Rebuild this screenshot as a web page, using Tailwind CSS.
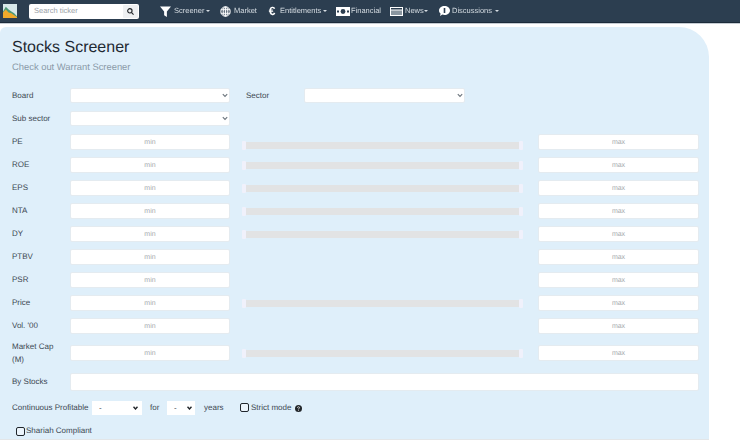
<!DOCTYPE html>
<html lang="en">
<head>
  <meta charset="UTF-8" />
  <title>Stocks Screener</title>
  <script src="https://cdn.jsdelivr.net/npm/@tailwindcss/browser@4"></script>
</head>
<body class="bg-white text-[#3d4852] font-['Liberation_Sans',Arial,sans-serif] text-[8px] [text-rendering:geometricPrecision] h-[444px] w-[740px] overflow-hidden">

  <!-- navbar -->
  <nav class="opacity-[.999] h-[23px] bg-[#2c3e50] border-b border-[#1c2b3a] shadow-[0_1px_0_#c5ccd3] flex items-center text-[#d5dce2] text-[7.5px]">
    <svg class="ml-[3px] w-[14px] h-[14px]" viewBox="0 0 15 15">
      <rect width="15" height="15" fill="#d8e8ea"/>
      <path d="M0 8 L3 3 L6 6 L9 8 L12 10 L15 13 V15 H0Z" fill="#4f9a78"/>
      <path d="M0 9 L3 6 L6 9 L9 10 L12 12 L15 14 V15 H0Z" fill="#f0a92c"/>
    </svg>
    <div class="ml-[12px] w-[110px] h-[15px] bg-white rounded-[2px] flex items-center justify-between">
      <span class="pl-[5px] text-[#9aa1a8]">Search ticker</span>
      <span class="w-[15px] h-[13px] mr-px bg-[#eef0f2] rounded-[1px] flex items-center justify-center">
        <svg class="w-[7px] h-[7px]" viewBox="0 0 16 16" fill="none" stroke="#212529" stroke-width="2.6"><circle cx="6.5" cy="6.5" r="5"/><path d="M10.5 10.5 15 15"/></svg>
      </span>
    </div>
    <div class="ml-[21px] flex items-center">
      <svg class="w-[11px] h-[11px] mr-[3px]" viewBox="0 0 12 12" fill="#fff"><path d="M0 0.5H12L7.5 6V12L4.5 10V6Z"/></svg>
      <span class="w-[31px]">Screener</span><span class="ml-[1px] border-x-[2.5px] border-x-transparent border-t-[2.5px] border-t-[#d5dce2]"></span>
    </div>
    <div class="ml-[10px] flex items-center">
      <svg class="w-[11px] h-[11px] mr-[3px]" viewBox="0 0 12 12" fill="none" stroke="#fff"><circle cx="6" cy="6" r="5.2" fill="#fff" fill-opacity=".25"/><ellipse cx="6" cy="6" rx="2.4" ry="5.2"/><path d="M1 4H11M1 8H11M6 1V11"/></svg>
      <span class="w-[24px]">Market</span>
    </div>
    <div class="ml-[10px] flex items-center">
      <span class="w-[8px] mr-[4px] text-white text-[12px] font-bold leading-none text-center">€</span>
      <span class="w-[42px]">Entitlements</span><span class="ml-px border-x-[2.5px] border-x-transparent border-t-[2.5px] border-t-[#d5dce2]"></span>
    </div>
    <div class="ml-[9px] flex items-center">
      <svg class="w-[14px] h-[9px] mr-px" viewBox="0 0 14 9"><rect width="14" height="9" fill="#fff"/><circle cx="7" cy="4.5" r="2.4" fill="#2c3e50"/><rect x="1" y="3.5" width="2" height="2" fill="#2c3e50"/><rect x="11" y="3.5" width="2" height="2" fill="#2c3e50"/></svg>
      <span class="w-[31px]">Financial</span>
    </div>
    <div class="ml-[8px] flex items-center">
      <svg class="w-[13px] h-[9px] mr-[2px]" viewBox="0 0 13 9"><rect width="13" height="9" fill="#fff"/><rect x="1" y="1" width="11" height="1.5" fill="#2c3e50"/><rect x="1" y="3.5" width="11" height="4.5" fill="#8a96a0"/></svg>
      <span class="w-[18px]">News</span><span class="ml-[1px] border-x-[2.5px] border-x-transparent border-t-[2.5px] border-t-[#d5dce2]"></span>
    </div>
    <div class="ml-[11px] flex items-center">
      <svg class="w-[11px] h-[10px] mr-[2px]" viewBox="0 0 11 10"><path d="M5.5 0C8.5 0 11 2 11 4.5S8.5 9 5.5 9C4.7 9 4 8.9 3.4 8.6L1 10L1.6 7.6C.6 6.8 0 5.7 0 4.5 0 2 2.5 0 5.5 0Z" fill="#fff"/><rect x="4.7" y="2" width="1.6" height="5" fill="#2c3e50"/></svg>
      <span class="w-[42px]">Discussions</span><span class="ml-px border-x-[2.5px] border-x-transparent border-t-[2.5px] border-t-[#d5dce2]"></span>
    </div>
  </nav>

  <!-- screener panel -->
  <main class="opacity-[.999] mt-[4px] w-[709px] h-[413px] bg-[#dfeffa] rounded-tl-[6px] rounded-tr-[30px] border-b border-[#e3e6e8] pl-[12px] pr-[10px] pt-[11px]">
    <h1 class="text-[16px] leading-[20px] text-[#1f2a33]">Stocks Screener</h1>
    <p class="mt-[3px] text-[9.4px] leading-[12px] text-[#8a9aa8]">Check out Warrant Screener</p>

    <div class="mt-[15px] flex items-center h-[15px]">
      <span class="w-[58px]">Board</span>
      <div class="relative w-[160px] h-[15px]">
        <select class="appearance-none block w-full h-full bg-white rounded-[2px] border border-[#e4ebf0]"></select>
        <svg class="absolute right-[2px] top-[5px] w-[6px] h-[5px]" viewBox="0 0 6 5" fill="none" stroke="#6c757d" stroke-width="1.1"><path d="M.8 1.2 3 3.5 5.2 1.2"/></svg>
      </div>
      <span class="ml-[16px] w-[58px]">Sector</span>
      <div class="relative w-[161px] h-[15px]">
        <select class="appearance-none block w-full h-full bg-white rounded-[2px] border border-[#e4ebf0]"></select>
        <svg class="absolute right-[2px] top-[5px] w-[6px] h-[5px]" viewBox="0 0 6 5" fill="none" stroke="#6c757d" stroke-width="1.1"><path d="M.8 1.2 3 3.5 5.2 1.2"/></svg>
      </div>
    </div>
    <div class="mt-[8px] flex items-center h-[15px]">
      <span class="w-[58px]">Sub sector</span>
      <div class="relative w-[160px] h-[15px]">
        <select class="appearance-none block w-full h-full bg-white rounded-[2px] border border-[#e4ebf0]"></select>
        <svg class="absolute right-[2px] top-[5px] w-[6px] h-[5px]" viewBox="0 0 6 5" fill="none" stroke="#6c757d" stroke-width="1.1"><path d="M.8 1.2 3 3.5 5.2 1.2"/></svg>
      </div>
    </div>

    <!-- range rows -->
    <div class="mt-[8px] flex flex-col gap-[7px]">
      <div class="flex items-center h-[16px]">
        <span class="w-[58px]">PE</span>
        <div class="w-[160px] h-[16px] pt-[2px] bg-white rounded-[2px] border border-[#e4ebf0] text-[#a5a9ad] text-[7px] flex items-center justify-center">min</div>
        <div class="w-[308px] pl-[12px] pr-[15px] flex items-center mt-[6px]"><span class="w-[4px] h-[9px] bg-[#f0f1fb] rounded-[1px]"></span><span class="flex-1 h-[7px] bg-[#e2e3e4]"></span><span class="w-[4px] h-[9px] bg-[#f0f1fb] rounded-[1px]"></span></div>
        <div class="w-[161px] h-[16px] pt-[2px] bg-white rounded-[2px] border border-[#e4ebf0] text-[#a5a9ad] text-[7px] flex items-center justify-center">max</div>
      </div>
      <div class="flex items-center h-[16px]">
        <span class="w-[58px]">ROE</span>
        <div class="w-[160px] h-[16px] pt-[2px] bg-white rounded-[2px] border border-[#e4ebf0] text-[#a5a9ad] text-[7px] flex items-center justify-center">min</div>
        <div class="w-[308px] pl-[12px] pr-[15px] flex items-center"><span class="w-[4px] h-[9px] bg-[#f0f1fb] rounded-[1px]"></span><span class="flex-1 h-[7px] bg-[#e2e3e4]"></span><span class="w-[4px] h-[9px] bg-[#f0f1fb] rounded-[1px]"></span></div>
        <div class="w-[161px] h-[16px] pt-[2px] bg-white rounded-[2px] border border-[#e4ebf0] text-[#a5a9ad] text-[7px] flex items-center justify-center">max</div>
      </div>
      <div class="flex items-center h-[16px]">
        <span class="w-[58px]">EPS</span>
        <div class="w-[160px] h-[16px] pt-[2px] bg-white rounded-[2px] border border-[#e4ebf0] text-[#a5a9ad] text-[7px] flex items-center justify-center">min</div>
        <div class="w-[308px] pl-[12px] pr-[15px] flex items-center"><span class="w-[4px] h-[9px] bg-[#f0f1fb] rounded-[1px]"></span><span class="flex-1 h-[7px] bg-[#e2e3e4]"></span><span class="w-[4px] h-[9px] bg-[#f0f1fb] rounded-[1px]"></span></div>
        <div class="w-[161px] h-[16px] pt-[2px] bg-white rounded-[2px] border border-[#e4ebf0] text-[#a5a9ad] text-[7px] flex items-center justify-center">max</div>
      </div>
      <div class="flex items-center h-[16px]">
        <span class="w-[58px]">NTA</span>
        <div class="w-[160px] h-[16px] pt-[2px] bg-white rounded-[2px] border border-[#e4ebf0] text-[#a5a9ad] text-[7px] flex items-center justify-center">min</div>
        <div class="w-[308px] pl-[12px] pr-[15px] flex items-center"><span class="w-[4px] h-[9px] bg-[#f0f1fb] rounded-[1px]"></span><span class="flex-1 h-[7px] bg-[#e2e3e4]"></span><span class="w-[4px] h-[9px] bg-[#f0f1fb] rounded-[1px]"></span></div>
        <div class="w-[161px] h-[16px] pt-[2px] bg-white rounded-[2px] border border-[#e4ebf0] text-[#a5a9ad] text-[7px] flex items-center justify-center">max</div>
      </div>
      <div class="flex items-center h-[16px]">
        <span class="w-[58px]">DY</span>
        <div class="w-[160px] h-[16px] pt-[2px] bg-white rounded-[2px] border border-[#e4ebf0] text-[#a5a9ad] text-[7px] flex items-center justify-center">min</div>
        <div class="w-[308px] pl-[12px] pr-[15px] flex items-center"><span class="w-[4px] h-[9px] bg-[#f0f1fb] rounded-[1px]"></span><span class="flex-1 h-[7px] bg-[#e2e3e4]"></span><span class="w-[4px] h-[9px] bg-[#f0f1fb] rounded-[1px]"></span></div>
        <div class="w-[161px] h-[16px] pt-[2px] bg-white rounded-[2px] border border-[#e4ebf0] text-[#a5a9ad] text-[7px] flex items-center justify-center">max</div>
      </div>
      <div class="flex items-center h-[16px]">
        <span class="w-[58px]">PTBV</span>
        <div class="w-[160px] h-[16px] pt-[2px] bg-white rounded-[2px] border border-[#e4ebf0] text-[#a5a9ad] text-[7px] flex items-center justify-center">min</div>
        <div class="w-[308px]"></div>
        <div class="w-[161px] h-[16px] pt-[2px] bg-white rounded-[2px] border border-[#e4ebf0] text-[#a5a9ad] text-[7px] flex items-center justify-center">max</div>
      </div>
      <div class="flex items-center h-[16px]">
        <span class="w-[58px]">PSR</span>
        <div class="w-[160px] h-[16px] pt-[2px] bg-white rounded-[2px] border border-[#e4ebf0] text-[#a5a9ad] text-[7px] flex items-center justify-center">min</div>
        <div class="w-[308px]"></div>
        <div class="w-[161px] h-[16px] pt-[2px] bg-white rounded-[2px] border border-[#e4ebf0] text-[#a5a9ad] text-[7px] flex items-center justify-center">max</div>
      </div>
      <div class="flex items-center h-[16px]">
        <span class="w-[58px]">Price</span>
        <div class="w-[160px] h-[16px] pt-[2px] bg-white rounded-[2px] border border-[#e4ebf0] text-[#a5a9ad] text-[7px] flex items-center justify-center">min</div>
        <div class="w-[308px] pl-[12px] pr-[15px] flex items-center"><span class="w-[4px] h-[9px] bg-[#f0f1fb] rounded-[1px]"></span><span class="flex-1 h-[7px] bg-[#e2e3e4]"></span><span class="w-[4px] h-[9px] bg-[#f0f1fb] rounded-[1px]"></span></div>
        <div class="w-[161px] h-[16px] pt-[2px] bg-white rounded-[2px] border border-[#e4ebf0] text-[#a5a9ad] text-[7px] flex items-center justify-center">max</div>
      </div>
      <div class="flex items-center h-[16px]">
        <span class="w-[58px]">Vol. '00</span>
        <div class="w-[160px] h-[16px] pt-[2px] bg-white rounded-[2px] border border-[#e4ebf0] text-[#a5a9ad] text-[7px] flex items-center justify-center">min</div>
        <div class="w-[308px]"></div>
        <div class="w-[161px] h-[16px] pt-[2px] bg-white rounded-[2px] border border-[#e4ebf0] text-[#a5a9ad] text-[7px] flex items-center justify-center">max</div>
      </div>
      <div class="mt-[4px] flex items-center h-[16px]">
        <span class="w-[58px] leading-[13px]">Market Cap<br>(M)</span>
        <div class="w-[160px] h-[16px] pt-[2px] bg-white rounded-[2px] border border-[#e4ebf0] text-[#a5a9ad] text-[7px] flex items-center justify-center">min</div>
        <div class="w-[308px] pl-[12px] pr-[15px] flex items-center"><span class="w-[4px] h-[9px] bg-[#f0f1fb] rounded-[1px]"></span><span class="flex-1 h-[7px] bg-[#e2e3e4]"></span><span class="w-[4px] h-[9px] bg-[#f0f1fb] rounded-[1px]"></span></div>
        <div class="w-[161px] h-[16px] pt-[2px] bg-white rounded-[2px] border border-[#e4ebf0] text-[#a5a9ad] text-[7px] flex items-center justify-center">max</div>
      </div>
    </div>

    <div class="mt-[12px] flex items-center h-[18px]">
      <span class="w-[58px]">By Stocks</span>
      <div class="w-[629px] h-[18px] bg-white rounded-[2px] border border-[#e4ebf0]"></div>
    </div>

    <div class="mt-[9px] flex items-center h-[15px] whitespace-nowrap">
      <span class="w-[80px]">Continuous Profitable</span>
      <div class="relative w-[50px] h-[14px]">
        <select class="appearance-none block w-full h-full bg-white pl-[7px]"><option>-</option></select>
        <svg class="absolute right-[4px] top-[5px] w-[5px] h-[4px]" viewBox="0 0 5 4" fill="none" stroke="#212529" stroke-width="1.4"><path d="M.5 .8 2.5 3 4.5 .8"/></svg>
      </div>
      <span class="ml-[8px] w-[9px]">for</span>
      <div class="relative ml-[8px] w-[28px] h-[14px]">
        <select class="appearance-none block w-full h-full bg-white pl-[7px]"><option>-</option></select>
        <svg class="absolute right-[3px] top-[5px] w-[5px] h-[4px]" viewBox="0 0 5 4" fill="none" stroke="#212529" stroke-width="1.4"><path d="M.5 .8 2.5 3 4.5 .8"/></svg>
      </div>
      <span class="ml-[9px] w-[19px]">years</span>
      <span class="ml-[17px] w-[9px] h-[9px] bg-white/40 border border-[#20262c] rounded-[2px]"></span>
      <span class="ml-[2px] w-[37px]">Strict mode</span>
      <svg class="ml-[7px] mt-[2px] w-[7px] h-[7px]" viewBox="0 0 8 8"><circle cx="4" cy="4" r="4" fill="#212529"/><path d="M2.8 3.1C2.8 2.3 3.3 2 4 2S5.2 2.4 5.2 3C5.2 3.8 4 3.9 4 4.8" fill="none" stroke="#fff" stroke-width=".9"/><rect x="3.5" y="5.4" width="1" height="1" fill="#fff"/></svg>
    </div>

    <div class="mt-[11px] pl-[4px] flex items-center h-[10px]">
      <span class="w-[9px] h-[9px] bg-white/40 border border-[#20262c] rounded-[2px]"></span>
      <span class="ml-[1px]">Shariah Compliant</span>
    </div>
  </main>
</body>
</html>
